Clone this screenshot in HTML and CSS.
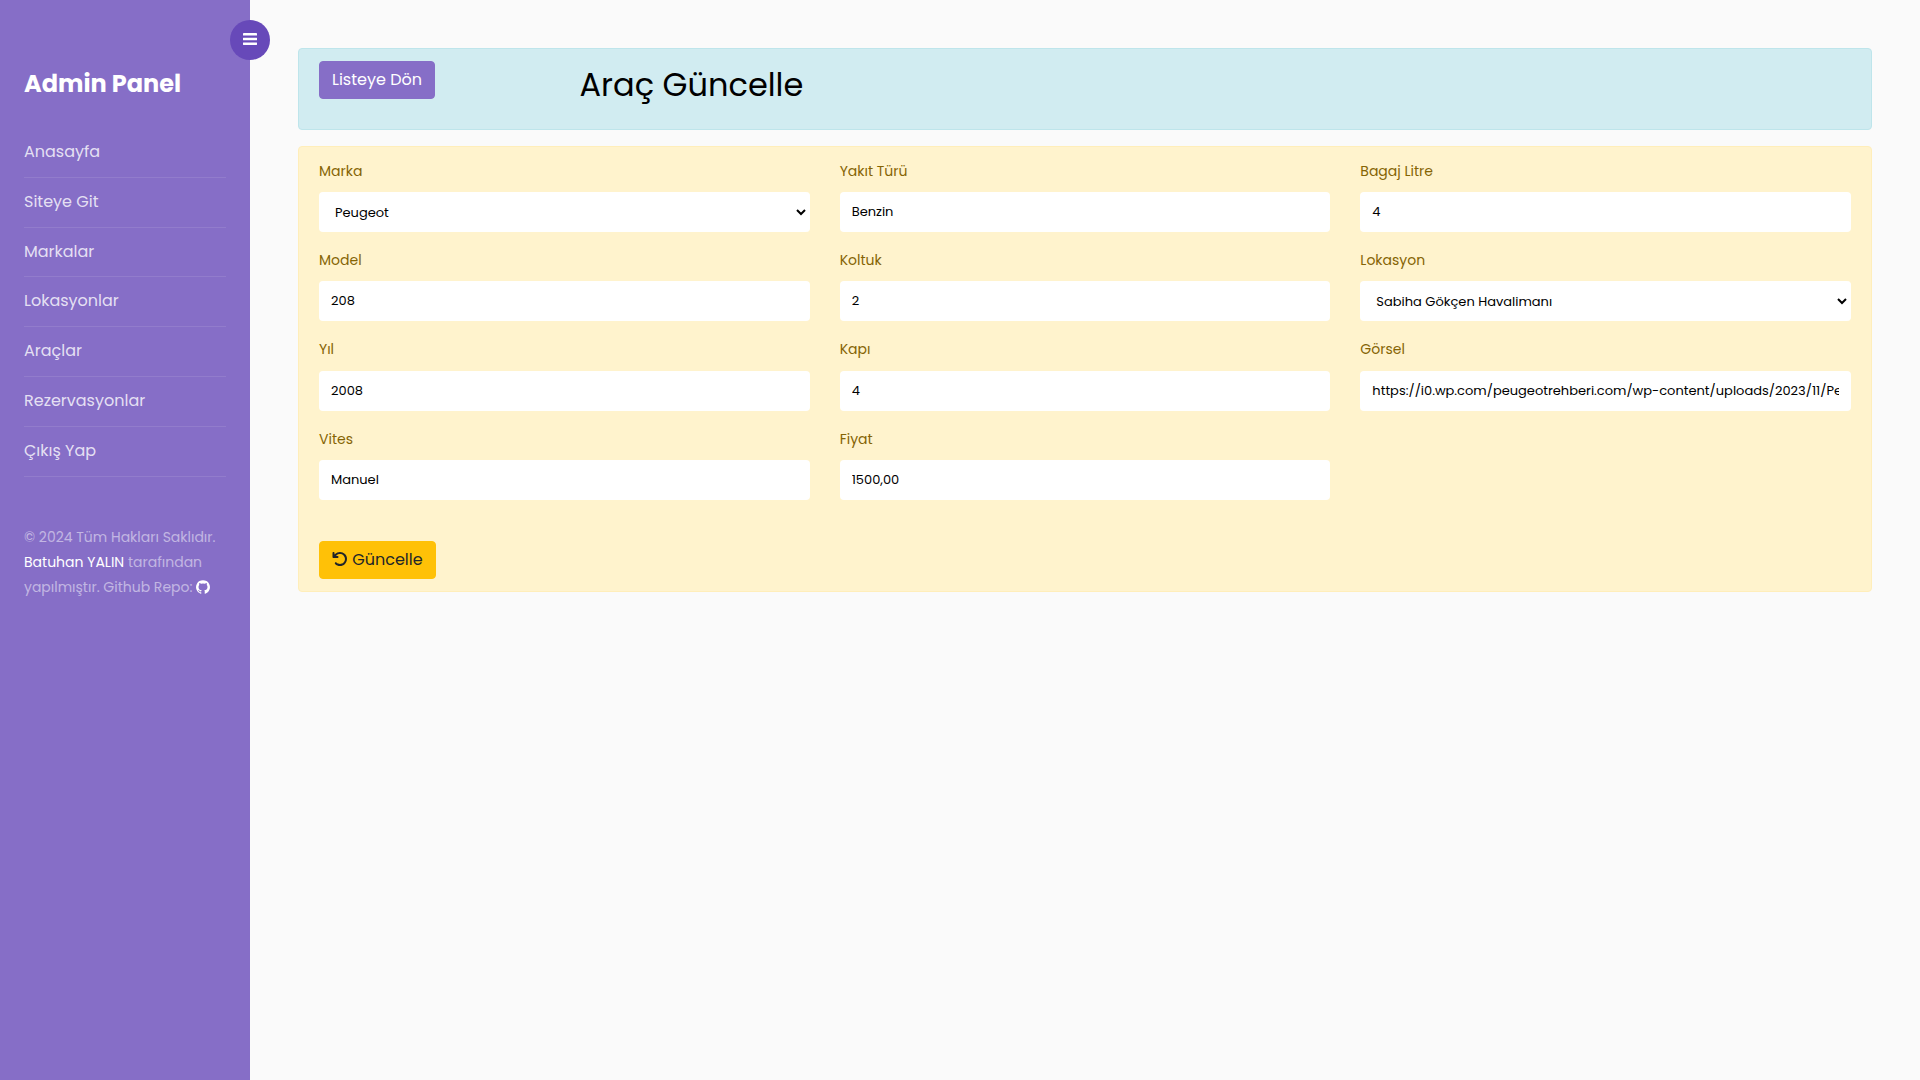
FILE: index.html
```
<!DOCTYPE html>
<html lang="tr">
<head>
<meta charset="utf-8">
<title>Araç Güncelle</title>
<link rel="stylesheet" href="styles.css">
</head>
<body>
<div class="wrapper">
  <nav class="sidebar">
    <button type="button" class="toggle" aria-label="Menü">
      <svg viewBox="0 0 14 12" width="14" height="12" fill="currentColor"><rect width="14" height="2.6" rx=".4"/><rect y="4.700" width="14" height="2.600" rx=".4"/><rect y="9.400" width="14" height="2.600" rx=".4"/></svg>
    </button>
    <h1 class="brand">Admin Panel</h1>
    <ul class="menu">
      <li><a>Anasayfa</a></li>
      <li><a>Siteye Git</a></li>
      <li><a>Markalar</a></li>
      <li><a>Lokasyonlar</a></li>
      <li><a>Araçlar</a></li>
      <li><a>Rezervasyonlar</a></li>
      <li><a>Çıkış Yap</a></li>
    </ul>
    <p class="footer">© 2024 Tüm Hakları Saklıdır. <a>Batuhan YALIN</a> tarafından yapılmıştır. Github Repo: <a><svg class="github" viewBox="0 0 1536 1498" width="14" height="14" fill="currentColor"><path d="M768 0q209 0 385.500 103t279.500 279.500T1536 768q0 251-146.500 451.500T1011 1497q-27 5-40-7t-13-30q0-3 .5-76.500t.5-134.500q0-97-52-142 57-6 102.500-18t94-39 81-66.500 53-105T1258 728q0-119-79-206 37-91-8-204-28-9-81 11t-92 44l-38 24q-93-26-192-26t-192 26q-16-11-42.500-27T450 331.500 365 318q-45 113-8 204-79 87-79 206 0 85 20.500 150T351 983t80.500 67 94 39 102.500 18q-39 36-49 103-21 10-45 15t-57 5-65.500-21.500T356 1146q-19-32-48.500-52t-49.500-24l-20-3q-21 0-29 4.500t-5 11.500 9 14 13 12l7 5q22 10 43.500 38t31.500 51l10 23q13 38 44 61.500t67 30 69.500 7 55.500-3.500l23-4q0 38 .5 88.500t.5 54.500q0 18-13 30t-40 7q-232-77-378.500-277.500T0 768q0-209 103-385.500T382.500 103 768 0z"/></svg></a></p>
  </nav>
  <main class="content">
    <div class="alert alert-info">
      <div class="back"><a class="btn btn-primary">Listeye Dön</a></div>
      <h2 class="title">Araç Güncelle</h2>
    </div>
    <form class="alert alert-warning">
      <div class="columns">
        <div>
          <div class="field"><label>Marka</label><select><option>Peugeot</option></select></div>
          <div class="field"><label>Model</label><input type="text" value="208"></div>
          <div class="field"><label>Yıl</label><input type="text" value="2008"></div>
          <div class="field"><label>Vites</label><input type="text" value="Manuel"></div>
        </div>
        <div>
          <div class="field"><label>Yakıt Türü</label><input type="text" value="Benzin"></div>
          <div class="field"><label>Koltuk</label><input type="text" value="2"></div>
          <div class="field"><label>Kapı</label><input type="text" value="4"></div>
          <div class="field"><label>Fiyat</label><input type="text" value="1500,00"></div>
        </div>
        <div>
          <div class="field"><label>Bagaj Litre</label><input type="text" value="4"></div>
          <div class="field"><label>Lokasyon</label><select><option>Sabiha Gökçen Havalimanı</option></select></div>
          <div class="field"><label>Görsel</label><input type="text" value="https://i0.wp.com/peugeotrehberi.com/wp-content/uploads/2023/11/Peugeot-208.jpg"></div>
        </div>
      </div>
      <button type="button" class="btn btn-warning"><svg viewBox="0 0 512 512" width="16" height="16" fill="currentColor"><path d="M125.700 160H176c17.700 0 32 14.300 32 32s-14.300 32-32 32H48c-17.700 0-32-14.300-32-32V64c0-17.700 14.300-32 32-32s32 14.300 32 32v51.200L97.600 97.600c87.500-87.500 229.300-87.500 316.800 0s87.500 229.300 0 316.800s-229.300 87.500-316.800 0c-12.500-12.500-12.500-32.800 0-45.300s32.800-12.500 45.300 0c62.500 62.500 163.800 62.500 226.300 0s62.500-163.800 0-226.300s-163.800-62.500-226.300 0L125.700 160z"/></svg> Güncelle</button>
    </form>
  </main>
</div>
</body>
</html>
```
FILE: styles.css
```
*, *::before, *::after { box-sizing: border-box; }

body {
  margin: 0;
  background: #fafafa;
  color: gray;
  font-family: Poppins, Inter, sans-serif;
  font-size: 14px;
  line-height: 1.8;
}

.wrapper { display: flex; min-height: 100vh; }

.sidebar {
  position: relative;
  flex: 0 0 250px;
  padding: 66px 24px 24px;
  background: #866ec7;
  color: #fff;
}

.toggle {
  position: absolute;
  top: 20px;
  right: -20px;
  display: flex;
  align-items: center;
  justify-content: center;
  width: 40px;
  height: 40px;
  padding: 0 0 2px;
  border: 0;
  border-radius: 50%;
  background: #6749b9;
  color: #fff;
}

.brand {
  margin: 0 0 26px;
  font-size: 24px;
  font-weight: 700;
  line-height: 36px;
}

.menu {
  margin: 0 0 48px;
  padding: 0;
  list-style: none;
  font-size: 16px;
}

.menu a {
  display: block;
  padding: 10px 0;
  border-bottom: 1px solid rgba(255, 255, 255, .1);
  color: rgba(255, 255, 255, .8);
}

.footer { margin: 0; color: rgba(255, 255, 255, .5); }
.footer a { color: #fff; }
.github { vertical-align: -2px; }

.content { flex: 1; min-width: 0; padding: 48px; }

.alert {
  margin-bottom: 16px;
  padding: 12px 20px;
  border: 1px solid transparent;
  border-radius: 4px;
}

.alert-info {
  display: flex;
  height: 82px;
  border-color: #bee5eb;
  background: #d1ecf1;
}

.back { flex: 0 0 260.5px; }

.title {
  margin: 0;
  color: #000;
  font-size: 32px;
  font-weight: 400;
  line-height: 48px;
}

.alert-warning {
  border-color: #ffeeba;
  background: #fff3cd;
  color: #856404;
}

.columns {
  display: grid;
  grid-template-columns: repeat(3, 1fr);
  gap: 30px;
  margin-bottom: 25px;
}

.field { margin-bottom: 16px; }
.field label { display: block; margin-bottom: 8px; }

.field input,
.field select {
  display: block;
  width: 100%;
  height: 40px;
  padding: 12px;
  border: 0;
  border-radius: 4px;
  background: #fff;
  color: #000;
  font-family: inherit;
  font-size: 13px;
  line-height: 1.5;
}

.field select { padding: 6px 12px; border-right: 1px solid #fff; }

.btn {
  display: inline-block;
  padding: 6px 12px;
  border: 1px solid transparent;
  border-radius: 4px;
  font-family: inherit;
  font-size: 16px;
  line-height: 24px;
}

.btn-primary { border-color: #866ec7; background: #866ec7; color: #fff; }
.btn-warning { border-color: #ffc107; background: #ffc107; color: #212529; }
.btn-warning svg { vertical-align: -2px; }
```
